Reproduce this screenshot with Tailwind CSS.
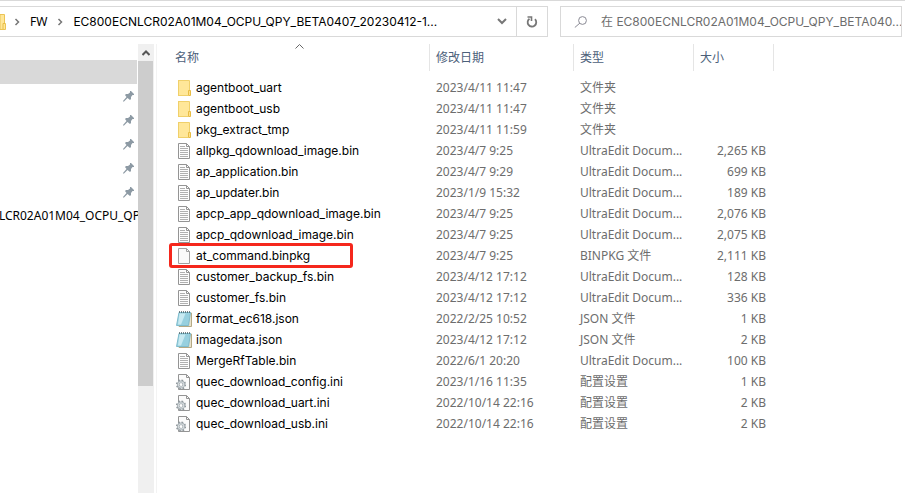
<!DOCTYPE html>
<html lang="zh-CN">
<head>
<meta charset="utf-8">
<meta name="viewport" content="width=device-width, initial-scale=1">
<title>FW</title>
<script src="https://cdn.jsdelivr.net/npm/@tailwindcss/browser@4"></script>
</head>
<body class="bg-white font-['Noto_Sans','Noto_Sans_CJK_SC',sans-serif] text-[12px] text-black">
<svg class="hidden" aria-hidden="true">
  <symbol id="folder" viewBox="0 0 16 16">
    <path d="M2 .5h11.500v15H2z" fill="#ffe799"/><path d="M2 .5h11.500v10M2.500 .5v15M2 15.500h10" fill="none" stroke="#f0d06a"/>
    <path d="M12.500 10.500h2v5h-2z" fill="#ffe08a" stroke="#e8bd45"/>
  </symbol>
  <symbol id="doc" viewBox="0 0 16 16">
    <path d="M2.500 .5h8l3 3v12h-11z" fill="#fdfdfd" stroke="#949494"/><path d="M10.500 .5v3h3" fill="none" stroke="#949494"/>
    <path d="M4 3.500h5M4 5.500h8M4 7.500h8M4 9.500h8M4 11.500h8M4 13.500h8" stroke="#b0b0b0"/>
  </symbol>
  <symbol id="blank" viewBox="0 0 16 16">
    <path d="M2.500 .5h8l3 3v12h-11z" fill="#fafafa" stroke="#a0a0a0"/><path d="M10.500 .5v3h3" fill="none" stroke="#a0a0a0"/>
  </symbol>
  <symbol id="json" viewBox="0 0 16 16">
    <path d="M4 2h11.500v13.500H3z" fill="#e9e2cc" stroke="#b5a984"/>
    <path d="M3 1.500h11.500L12.500 14.500H.5z" fill="#97d0df" stroke="#7fbccd"/>
    <path d="M3.500 2.500h6L5 13.500H2z" fill="#c8eaf2"/>
    <path d="M3 1h12" stroke="#4e6066" stroke-width="1.500" stroke-dasharray="1 1"/>
  </symbol>
  <symbol id="ini" viewBox="0 0 16 16">
    <path d="M2.500 .5h8l3 3v12h-11z" fill="#fbfbfb" stroke="#949494"/><path d="M10.500 .5v3h3" fill="none" stroke="#949494"/>
    <circle cx="5" cy="10.500" r="4.300" fill="#fff" stroke="#8f979c" stroke-width="1.600" stroke-dasharray="1.690 1.690"/>
    <circle cx="5" cy="10.500" r="2.700" fill="#fff" stroke="#9aa3a8" stroke-width="2.400"/>
    <circle cx="5" cy="10.500" r="2.700" fill="none" stroke="#d3d9dc" stroke-width="1.200"/>
  </symbol>
  <symbol id="pin" viewBox="0 0 11 11">
    <path d="M7 0h1l3 3v1H9.500L8 6v2L7 9 4.500 7 1 10.500H0V10L3.500 6 2 4l1-1h2l2-1.500z" fill="#8d9aa4"/>
  </symbol>
</svg>
<div class="flex min-h-screen flex-col border-t border-[#d9d9d9]">
  <header class="flex gap-3 pt-[5px] pr-[3px]">
    <nav class="flex h-[31px] w-[548px] shrink-0 items-center border border-l-0 border-[#d9d9d9]" aria-label="路径">
      <svg class="h-4 w-[6px] shrink-0" viewBox="0 0 6 16"><path d="M0 .5h4.500v9h1v6H0z" fill="#ffe799" stroke="#ecc455"/><path d="M3 15V9.500h2" fill="none" stroke="#e8bd45"/></svg>
      <svg class="ml-[8px] h-[8px] w-[6px] shrink-0" viewBox="0 0 6 8"><path d="M1.500 1l3 3-3 3" fill="none" stroke="#777" stroke-width="1.500"/></svg>
      <a href="#" class="ml-[10px]">FW</a>
      <svg class="ml-[10px] h-[8px] w-[6px] shrink-0" viewBox="0 0 6 8"><path d="M1.500 1l3 3-3 3" fill="none" stroke="#777" stroke-width="1.500"/></svg>
      <a href="#" class="ml-[10px] min-w-0 flex-1 overflow-hidden font-[Inter,sans-serif] whitespace-nowrap">EC800ECNLCR02A01M04_OCPU_QPY_BETA0407_20230412-1...</a>
      <button class="flex h-full w-[29px] items-center justify-center" aria-label="展开"><svg class="h-[7px] w-[10px]" viewBox="0 0 10 7"><path d="M1 1l4 4 4-4" fill="none" stroke="#777" stroke-width="2"/></svg></button>
      <button class="flex h-full w-[31px] items-center justify-center border-l border-[#d9d9d9]" aria-label="刷新"><svg class="h-3 w-3" viewBox="0 0 12 12"><path d="M9 3.200A4.300 4.300 0 1 1 3.500 2.700" fill="none" stroke="#777" stroke-width="1.800"/><path d="M1.500 1h4v4" fill="none" stroke="#777" stroke-width="1.600"/></svg></button>
    </nav>
    <label class="flex h-[31px] min-w-0 flex-1 items-center border border-[#d9d9d9]">
      <svg class="ml-[13px] h-3 w-[13px] shrink-0" viewBox="0 0 13 12"><circle cx="8.500" cy="4.500" r="3.900" fill="none" stroke="#8a8a94"/><path d="M6 7L.8 11.500" stroke="#8a8a94"/></svg>
      <input aria-label="搜索" class="ml-[14px] min-w-0 flex-1 font-['Inter','Noto_Sans_CJK_SC',sans-serif] outline-none placeholder:text-[#6d6d6d]" placeholder="在 EC800ECNLCR02A01M04_OCPU_QPY_BETA040...">
    </label>
  </header>
  <div class="flex flex-1 pt-[7px]">
    <aside class="flex w-[157px] shrink-0 border-r border-[#f3f3f3]">
      <ul id="side" class="w-[138px] overflow-hidden pt-4 pr-px">
        <li class="h-6 bg-[#d9d9d9]"></li>
      </ul>
      <div class="flex w-4 flex-col bg-[#f0f0f0]">
        <button class="flex h-[17px] items-center justify-center" aria-label="向上滚动"><svg class="h-[6px] w-2" viewBox="0 0 8 6"><path d="M.5 5L4 1.500 7.500 5" fill="none" stroke="#555" stroke-width="2"/></svg></button>
        <div class="mr-px h-[325px] bg-[#cdcdcd]"></div>
      </div>
    </aside>
    <main class="min-w-0 flex-1">
      <table class="w-[617px] table-fixed border-collapse text-left">
        <colgroup><col class="w-[273px]"><col class="w-[144px]"><col class="w-[120px]"><col class="w-[80px]"></colgroup>
        <thead class="text-[#4c607a]">
          <tr class="h-[33px]">
            <th class="relative p-0 align-top font-normal"><button class="h-[27px] w-full border-r border-[#e5e5e5] pl-[18px] text-left">名称</button>
              <svg class="absolute top-0 left-[138px] h-[5px] w-[9px]" viewBox="0 0 9 5"><path d="M.5 4.500l4-4 4 4" fill="none" stroke="#666"/></svg></th>
            <th class="p-0 align-top font-normal"><button class="h-[27px] w-full border-r border-[#e5e5e5] pl-[6px] text-left">修改日期</button></th>
            <th class="p-0 align-top font-normal"><button class="h-[27px] w-full border-r border-[#e5e5e5] pl-[6px] text-left">类型</button></th>
            <th class="p-0 align-top font-normal"><button class="h-[27px] w-full border-r border-[#e5e5e5] pl-[6px] text-left">大小</button></th>
          </tr>
        </thead>
        <tbody id="rows"></tbody>
      </table>
    </main>
  </div>
</div>
<script>
const pin = '<li class="flex h-6 items-center justify-end pr-[3px]"><svg class="size-[11px]" role="img" aria-label="已固定"><use href="#pin"/></svg></li>';
document.getElementById('side').insertAdjacentHTML('beforeend', pin.repeat(5) +
  '<li class="flex h-6 items-center justify-end whitespace-nowrap"><a href="#" class="-mr-[3px]">NLCR02A01M04_OCPU_QP</a></li>');
const U = 'UltraEdit Docum...';
const files = [
  ['folder','agentboot_uart','2023/4/11 11:47','文件夹',''],
  ['folder','agentboot_usb','2023/4/11 11:47','文件夹',''],
  ['folder','pkg_extract_tmp','2023/4/11 11:59','文件夹',''],
  ['doc','allpkg_qdownload_image.bin','2023/4/7 9:25',U,'2,265 KB'],
  ['doc','ap_application.bin','2023/4/7 9:29',U,'699 KB'],
  ['doc','ap_updater.bin','2023/1/9 15:32',U,'189 KB'],
  ['doc','apcp_app_qdownload_image.bin','2023/4/7 9:25',U,'2,076 KB'],
  ['doc','apcp_qdownload_image.bin','2023/4/7 9:25',U,'2,075 KB'],
  ['blank','at_command.binpkg','2023/4/7 9:25','BINPKG 文件','2,111 KB'],
  ['doc','customer_backup_fs.bin','2023/4/12 17:12',U,'128 KB'],
  ['doc','customer_fs.bin','2023/4/12 17:12',U,'336 KB'],
  ['json','format_ec618.json','2022/2/25 10:52','JSON 文件','1 KB'],
  ['json','imagedata.json','2023/4/12 17:12','JSON 文件','2 KB'],
  ['doc','MergeRfTable.bin','2022/6/1 20:20',U,'100 KB'],
  ['ini','quec_download_config.ini','2023/1/16 11:35','配置设置','1 KB'],
  ['ini','quec_download_uart.ini','2022/10/14 22:16','配置设置','2 KB'],
  ['ini','quec_download_usb.ini','2022/10/14 22:16','配置设置','2 KB'],
];
document.getElementById('rows').innerHTML = files.map(([icon, name, date, type, size]) => `
<tr class="h-[21px] whitespace-nowrap text-[#6d6d6d]">
  <td class="relative p-0 pl-[19px]"><div class="flex items-center gap-1 text-black"><svg class="size-4 shrink-0" aria-hidden="true"><use href="#${icon}"/></svg><span class="font-[Inter,sans-serif] leading-[21px]">${name}</span></div>${icon === 'blank' ? '<div class="absolute -top-[2px] left-[12px] h-[25px] w-[184px] rounded-[3px] border-[3px] border-[#f5271c]"></div>' : ''}</td>
  <td class="p-0 pl-[6px]">${date}</td><td class="p-0 pl-[6px]">${type}</td><td class="p-0 pr-[8px] text-right">${size}</td>
</tr>`).join('');
</script>
</body>
</html>
